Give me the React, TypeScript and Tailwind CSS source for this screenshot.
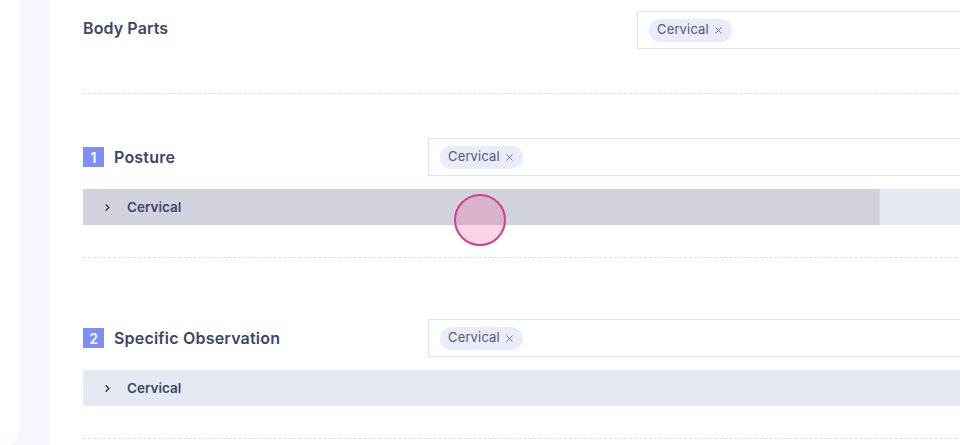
import { ChevronRight, X } from 'lucide-react';

const font = { fontFamily: 'Inter, "Open Sans", sans-serif' };

function Chip({ label }: { label: string }) {
  return (
    <span className="inline-flex h-[23px] items-center gap-1 rounded-full bg-[#e8ecfb] pl-[8px] pr-[8px] text-[13px] tracking-[0.15px] text-[#525b70]">
      {label}
      <X size={11} strokeWidth={1.8} className="text-[#59617a]" />
    </span>
  );
}

function TagInput({ tags }: { tags: string[] }) {
  return (
    <div className="flex h-[38px] flex-1 items-center gap-2 border border-[#e2e3ec] bg-white px-[11px]">
      {tags.map(t => <Chip key={t} label={t} />)}
    </div>
  );
}

function Divider() {
  return <div className="border-t border-dashed border-[#dcdcf0]" />;
}

function AccordionRow({ label, hover }: { label: string; hover?: boolean }) {
  return (
    <div className="flex h-[36px] bg-[#e5e9f1]">
      <div className={`flex items-center pl-[19px] ${hover ? 'w-[796px] bg-[#d0d3db] shadow-[1px_0_1px_rgba(0,0,0,0.06)]' : ''}`}>
        <ChevronRight size={11} strokeWidth={3.5} className="text-[#3a4668]" />
        <span className="ml-[14px] text-[13.5px] font-semibold text-[#3a4668]">{label}</span>
      </div>
    </div>
  );
}

function Section({ num, title, hover }: { num: number; title: string; hover?: boolean }) {
  return (
    <div>
      <div className="flex items-center">
        <div className="flex w-[345px] items-center">
          <span className="flex h-[20px] w-[21px] items-center justify-center bg-[#7c8ff6] text-[14px] font-semibold text-white">{num}</span>
          <span className="ml-[10px] text-[16px] font-semibold tracking-[0.2px] text-[#3a4668]">{title}</span>
        </div>
        <TagInput tags={['Cervical']} />
      </div>
      <div className="mt-[13px]">
        <AccordionRow label="Cervical" hover={hover} />
      </div>
    </div>
  );
}

export default function App() {
  return (
    <div className="relative flex h-[445px] w-[960px] overflow-hidden bg-[#f4f7ff]" style={font}>
      <div className="h-[445px] w-[19px] shrink-0 rounded-br-[14px] bg-white" />
      <div className="ml-[31px] flex-1 bg-white pl-[33px]">
        <div className="w-[1100px]">
          <div className="flex pt-[11px]">
            <div className="w-[554px] pt-[5px] text-[16px] font-semibold tracking-[0.1px] text-[#3a4668]">Body Parts</div>
            <TagInput tags={['Cervical']} />
          </div>
          <div className="mt-[44px]">
            <Divider />
          </div>
          <div className="mt-[44px]">
            <Section num={1} title="Posture" hover />
          </div>
          <div className="mt-[32px]">
            <Divider />
          </div>
          <div className="mt-[61px]">
            <Section num={2} title="Specific Observation" />
          </div>
          <div className="mt-[32px]">
            <Divider />
          </div>
        </div>
      </div>
      <div className="absolute left-[454px] top-[194px] h-[52px] w-[52px] rounded-full border-2 border-[#d63e8c] bg-[rgba(236,80,150,0.25)]" />
    </div>
  );
}
